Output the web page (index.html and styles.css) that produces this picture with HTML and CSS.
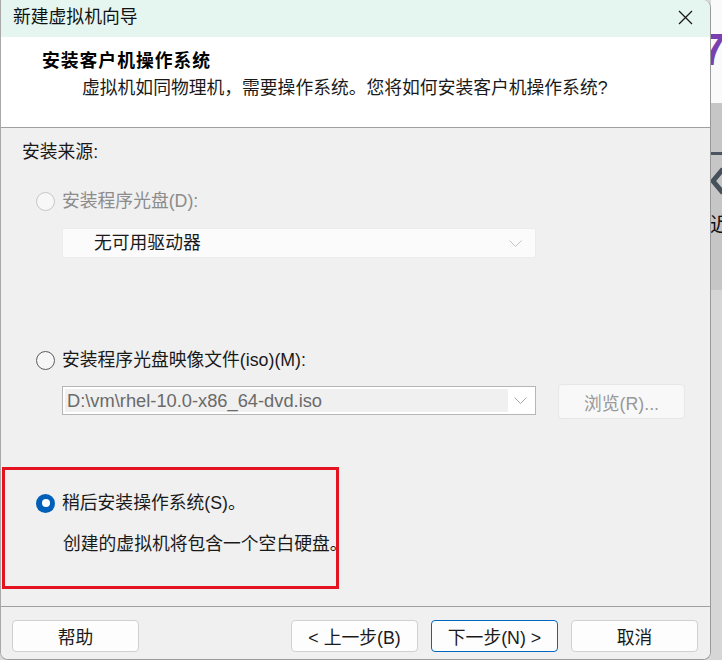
FILE: index.html
```html
<!DOCTYPE html>
<html lang="zh-CN">
<head>
<meta charset="utf-8">
<title>新建虚拟机向导</title>
<link rel="stylesheet" href="styles.css">
</head>
<body>
<div class="screen">
  <div class="dialog">
    <div class="titlebar">
      <span class="title">新建虚拟机向导</span>
      <span class="close">
        <svg width="15" height="15" viewBox="0 0 15 15"><path d="M1 1 L14 14 M14 1 L1 14" stroke="#1a1a1a" stroke-width="1.3" fill="none"/></svg>
      </span>
    </div>
    <div class="header">
      <div class="h-title">安装客户机操作系统</div>
      <div class="h-sub">虚拟机如同物理机，需要操作系统。您将如何安装客户机操作系统?</div>
    </div>
    <div class="main">
      <div class="section-label">安装来源:</div>
      <div class="opt opt-disc disabled"><span class="radio"></span><span class="opt-text">安装程序光盘(D):</span></div>
      <div class="select">
        <span class="select-text">无可用驱动器</span>
        <svg class="chev" width="13" height="7" viewBox="0 0 13 7"><path d="M0.5 0.5 L6.5 6.5 L12.5 0.5" stroke="#c2c2c2" stroke-width="1" fill="none"/></svg>
      </div>
      <div class="opt opt-iso"><span class="radio"></span><span class="opt-text">安装程序光盘映像文件(iso)(M):</span></div>
      <div class="iso-row">
        <div class="combo">
          <div class="combo-field">D:\vm\rhel-10.0-x86_64-dvd.iso</div>
          <div class="combo-btn">
            <svg width="13" height="7" viewBox="0 0 13 7"><path d="M0.5 0.5 L6.5 6.5 L12.5 0.5" stroke="#a8a8a8" stroke-width="1" fill="none"/></svg>
          </div>
        </div>
        <button class="browse">浏览(R)...</button>
      </div>
      <div class="later">
        <div class="opt opt-later"><span class="radio checked"></span><span class="opt-text">稍后安装操作系统(S)。</span></div>
        <div class="desc">创建的虚拟机将包含一个空白硬盘。</div>
      </div>
      <div class="highlight"></div>
    </div>
    <div class="footer">
      <button class="btn">帮助</button>
      <button class="btn btn-back">&lt; 上一步(B)</button>
      <button class="btn btn-primary">下一步(N) &gt;</button>
      <button class="btn">取消</button>
    </div>
  </div>
  <div class="strip">
    <div class="strip-top"><span class="seven">7</span></div>
    <div class="strip-panel">
      <div class="strip-line"></div>
      <svg class="strip-arrow" width="11" height="30" viewBox="0 0 11 30"><path d="M12 3 L2 15 L12 27" stroke="#45505a" stroke-width="5" fill="none"/></svg>
      <span class="strip-char">近</span>
    </div>
    <div class="strip-bottom"></div>
  </div>
</div>
</body>
</html>
```

FILE: styles.css
```css
* { box-sizing: border-box; }
html, body { margin: 0; padding: 0; }
body {
  width: 722px;
  height: 660px;
  overflow: hidden;
  font-family: "Liberation Sans", "Noto Sans CJK SC", sans-serif;
  font-size: 17.8px;
  color: #1a1a1a;
  background: #d9d9d9;
}
.screen {
  display: flex;
  width: 722px;
  height: 660px;
}
.dialog {
  width: 711px;
  height: 660px;
  flex: none;
  display: flex;
  flex-direction: column;
  border-left: 1px solid #a8a8a8;
  border-right: 1px solid #9a9a9a;
  border-bottom: 1px solid #9a9a9a;
  border-radius: 0 8px 8px 8px;
  overflow: hidden;
  background: #f0f0f0;
}
.titlebar {
  height: 37px;
  flex: none;
  display: flex;
  align-items: center;
  padding: 0 0 3px 12px;
  background: #e5f6f0;
}
.title {
  flex: 1;
  color: #111;
  line-height: 24px;
}
.close {
  width: 50px;
  height: 34px;
  display: flex;
  align-items: center;
  justify-content: center;
  padding-top: 1px;
}
.header {
  height: 91px;
  flex: none;
  background: #ffffff;
  border-bottom: 1px solid #a0a0a0;
  padding-top: 12px;
}
.h-title {
  padding-left: 41px;
  line-height: 24px;
  font-weight: bold;
  letter-spacing: 1px;
  color: #000;
}
.h-sub {
  margin-top: 3px;
  padding-left: 81px;
  line-height: 24px;
  color: #1a1a1a;
}
.main {
  position: relative;
  height: 478px;
  flex: none;
  padding: 12px 0 0 21px;
  background: #f0f0f0;
}
.section-label {
  line-height: 24px;
  color: #1a1a1a;
}
.opt {
  display: flex;
  align-items: center;
  height: 24px;
  margin-left: 14px;
}
.opt-disc { margin-top: 25px; }
.opt-iso { margin-top: 90px; }
.opt-text {
  margin-left: 7px;
  line-height: 24px;
}
.disabled .opt-text { color: #8c8c8c; }
.radio {
  width: 19px;
  height: 19px;
  flex: none;
  border-radius: 50%;
  border: 1px solid #5c5c5c;
  background: #f6f6f6;
  display: flex;
  align-items: center;
  justify-content: center;
}
.disabled .radio {
  border-color: #c6c6c6;
  background: #f7f7f7;
}
.radio.checked {
  border: none;
  background: #005fb8;
}
.radio.checked::after {
  content: "";
  width: 8px;
  height: 8px;
  border-radius: 50%;
  background: #ffffff;
}
.select {
  margin: 15px 0 0 40px;
  width: 474px;
  height: 30px;
  display: flex;
  align-items: center;
  justify-content: space-between;
  padding: 0 13px 0 31px;
  background: #fbfbfb;
  border: 1px solid #ececec;
  border-radius: 2px;
}
.select-text { color: #1a1a1a; line-height: 24px; }
.iso-row {
  margin: 12px 0 0 40px;
  display: flex;
  align-items: flex-start;
}
.combo {
  margin-top: 2px;
  width: 474px;
  height: 29px;
  display: flex;
  border: 1px solid #b6b6b6;
  background: #ffffff;
  padding: 2px 0 2px 2px;
}
.combo-field {
  width: 443px;
  height: 23px;
  background: #f0f0f0;
  color: #6a6a6a;
  font-size: 18.3px;
  line-height: 23px;
  padding-left: 2px;
  white-space: nowrap;
}
.combo-btn {
  flex: 1;
  display: flex;
  align-items: center;
  justify-content: center;
  padding-right: 2px;
}
.browse {
  margin-left: 22px;
  width: 127px;
  height: 35px;
  font: inherit;
  color: #999999;
  background: #f8f8f8;
  border: 1px solid #e7e7e7;
  border-radius: 4px;
  padding: 0;
}
.later { margin-top: 72px; }
.desc {
  margin: 17px 0 0 41px;
  line-height: 24px;
  color: #1a1a1a;
}
.highlight {
  position: absolute;
  left: 1px;
  top: 339px;
  width: 337px;
  height: 122px;
  border: 3px solid #e3141f;
}
.footer {
  flex: 1;
  border-top: 1px solid #a0a0a0;
  display: flex;
  align-items: flex-start;
  gap: 13px;
  padding: 13px 0 0 11px;
  background: #f0f0f0;
}
.btn {
  width: 127px;
  height: 32px;
  font: inherit;
  color: #1a1a1a;
  background: #fdfdfd;
  border: 1px solid #d0d0d0;
  border-radius: 4px;
  padding: 0;
}
.btn-back { margin-left: auto; }
.footer .btn:last-child { margin-right: 12px; }
.btn-primary { border-color: #0067c0; }
.strip {
  width: 11px;
  flex: none;
  display: flex;
  flex-direction: column;
  overflow: hidden;
}
.strip-top {
  height: 103px;
  background: #fafafa;
  padding-top: 28px;
  overflow: hidden;
}
.seven {
  display: block;
  margin-left: -10px;
  font-size: 44px;
  font-weight: bold;
  line-height: 44px;
  color: #7b3fb0;
}
.strip-panel {
  height: 187px;
  background: #c6c6c6;
  padding-top: 49px;
  overflow: hidden;
}
.strip-line {
  height: 3px;
  background: #4a5560;
}
.strip-arrow {
  display: block;
  margin-top: 11px;
}
.strip-char {
  display: block;
  margin-top: 16px;
  margin-left: -1px;
  font-family: "Noto Sans CJK SC", sans-serif;
  font-size: 20px;
  line-height: 24px;
  color: #111;
  white-space: nowrap;
}
.strip-bottom {
  flex: 1;
  background: #d6d6d6;
}
```
